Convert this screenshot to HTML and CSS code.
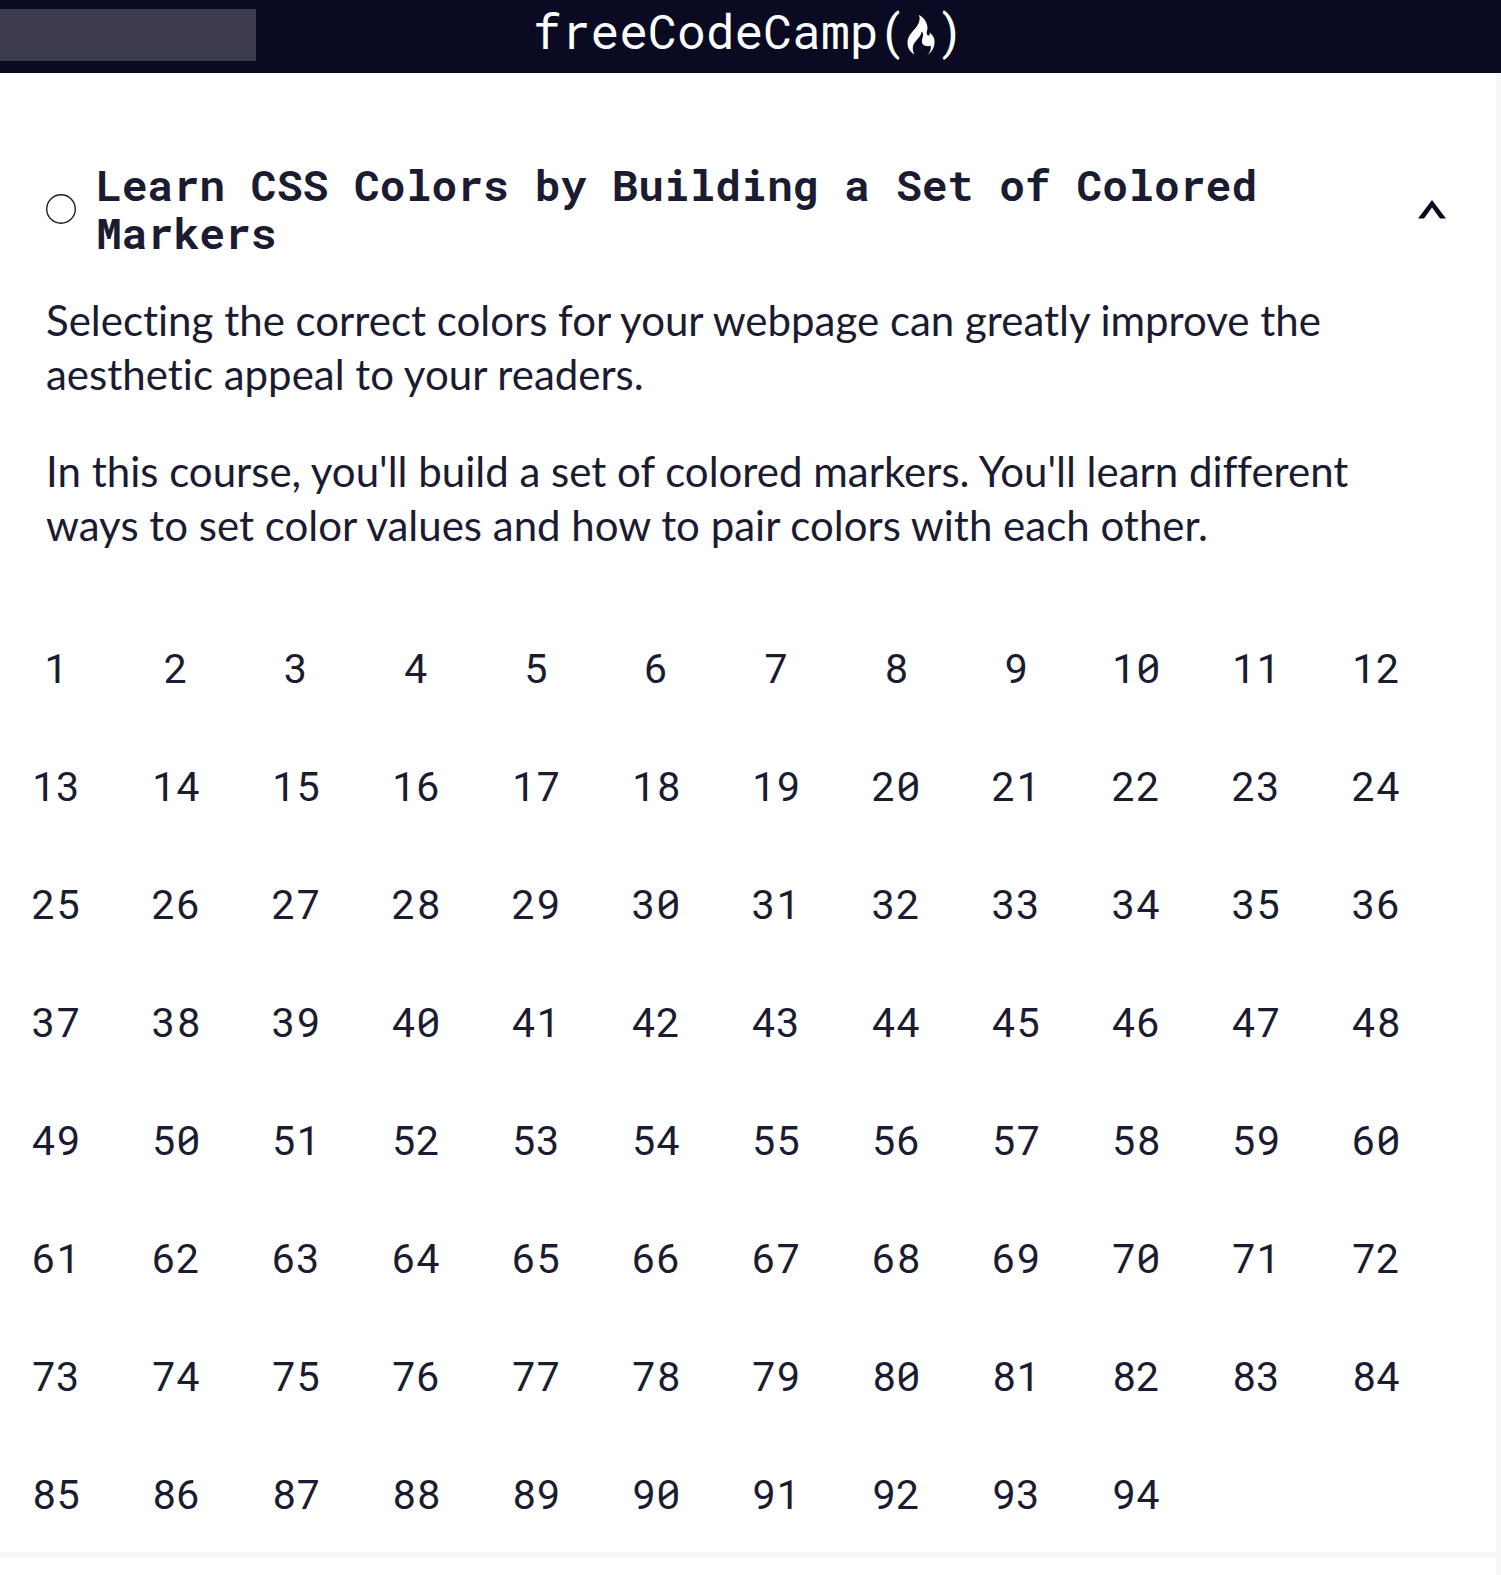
FILE: index.html
```html
<!DOCTYPE html>
<html lang="en">
<head>
  <meta charset="utf-8">
  <meta name="viewport" content="width=device-width, initial-scale=1">
  <title>Learn CSS Colors by Building a Set of Colored Markers | freeCodeCamp.org</title>
  <link rel="stylesheet" href="styles.css">
</head>
<body>
  <header class="site-header">
    <input class="search" type="search" aria-label="Search">
    <a class="logo" href="#" aria-label="freeCodeCamp">
      <span>freeCodeCamp(</span>
      <svg class="flame" viewBox="0 0 28 40" aria-hidden="true">
        <path d="M12 0C17 2 20.500 8 20.500 13C20.500 15.500 19 17.500 20 19.500C21.500 21.500 23.500 20.500 22.500 17.500C26 20 28 24 27.500 28C27 33.500 24.500 37 20.500 40C23.500 36.500 24.500 33 23.500 30.500C22 31.500 18 31.500 16 29.500C14 27 15.500 24 16 20.500C16.200 18 15.500 17 14.500 16.500C14.500 22 7 26 6 31C5.400 34.500 6 37 7.500 39.500C3 37 0.500 33 0.500 28C0.500 21 5 17.500 9 12.500C12 8.500 13.500 4.500 12 0Z"/>
      </svg>
      <span>)</span>
    </a>
  </header>

  <main class="map">
    <section class="block">
      <h3 class="block-heading">
        <button class="block-toggle" type="button" aria-expanded="true" aria-controls="block-body">
          <svg class="status" viewBox="0 0 30 30" aria-hidden="true"><circle cx="15" cy="15" r="14.300"/></svg>
          <span class="block-title">Learn CSS Colors by Building a Set of Colored Markers</span>
          <svg class="chevron" viewBox="0 0 28 19" aria-hidden="true"><path d="M0 18.500L14 0L28 18.500H22L14 7.500L6 18.500Z"/></svg>
        </button>
      </h3>
      <div id="block-body">
        <div class="intro">
          <p>Selecting the correct colors for your webpage can greatly improve the aesthetic appeal to your readers.</p>
          <p>In this course, you'll build a set of colored markers. You'll learn different ways to set color values and how to pair colors with each other.</p>
        </div>
        <nav class="steps" aria-label="Steps">
          <a href="#">1</a><a href="#">2</a><a href="#">3</a><a href="#">4</a><a href="#">5</a><a href="#">6</a><a href="#">7</a><a href="#">8</a><a href="#">9</a><a href="#">10</a><a href="#">11</a><a href="#">12</a>
          <a href="#">13</a><a href="#">14</a><a href="#">15</a><a href="#">16</a><a href="#">17</a><a href="#">18</a><a href="#">19</a><a href="#">20</a><a href="#">21</a><a href="#">22</a><a href="#">23</a><a href="#">24</a>
          <a href="#">25</a><a href="#">26</a><a href="#">27</a><a href="#">28</a><a href="#">29</a><a href="#">30</a><a href="#">31</a><a href="#">32</a><a href="#">33</a><a href="#">34</a><a href="#">35</a><a href="#">36</a>
          <a href="#">37</a><a href="#">38</a><a href="#">39</a><a href="#">40</a><a href="#">41</a><a href="#">42</a><a href="#">43</a><a href="#">44</a><a href="#">45</a><a href="#">46</a><a href="#">47</a><a href="#">48</a>
          <a href="#">49</a><a href="#">50</a><a href="#">51</a><a href="#">52</a><a href="#">53</a><a href="#">54</a><a href="#">55</a><a href="#">56</a><a href="#">57</a><a href="#">58</a><a href="#">59</a><a href="#">60</a>
          <a href="#">61</a><a href="#">62</a><a href="#">63</a><a href="#">64</a><a href="#">65</a><a href="#">66</a><a href="#">67</a><a href="#">68</a><a href="#">69</a><a href="#">70</a><a href="#">71</a><a href="#">72</a>
          <a href="#">73</a><a href="#">74</a><a href="#">75</a><a href="#">76</a><a href="#">77</a><a href="#">78</a><a href="#">79</a><a href="#">80</a><a href="#">81</a><a href="#">82</a><a href="#">83</a><a href="#">84</a>
          <a href="#">85</a><a href="#">86</a><a href="#">87</a><a href="#">88</a><a href="#">89</a><a href="#">90</a><a href="#">91</a><a href="#">92</a><a href="#">93</a><a href="#">94</a>
        </nav>
      </div>
    </section>
    <section class="block block-next"></section>
  </main>
</body>
</html>
```

FILE: styles.css
```css
* {
  box-sizing: border-box;
}

body {
  display: flex;
  flex-direction: column;
  min-height: 100vh;
  margin: 0;
  background: #f5f6f7;
  color: #1b1b32;
  font-family: Lato, sans-serif;
  font-size: 42px;
  font-variant-ligatures: none;
  line-height: 54px;
}

.site-header {
  display: grid;
  grid-template-columns: 1fr auto 1fr;
  align-items: center;
  height: 73px;
  padding: 0 4px 3px 0;
  background: #0a0a23;
}

.search {
  width: 256px;
  height: 52px;
  padding: 0 16px;
  border: 0;
  border-radius: 0;
  background: #3d3b4e;
  color: #fff;
  font: inherit;
  font-size: 24px;
}

.logo {
  display: flex;
  align-items: center;
  color: #fff;
  font-family: "Roboto Mono", "Liberation Mono", monospace;
  font-size: 48px;
  font-weight: 400;
  text-decoration: none;
}

.logo span {
  padding-bottom: 8px;
}

.flame {
  width: 28px;
  height: 40px;
  fill: #fff;
}

.map {
  display: flex;
  flex: 1;
  flex-direction: column;
  gap: 6px;
  padding-right: 5px;
}

.block {
  padding-top: 88px;
  background: #fff;
}

.block-next {
  flex: 1;
  padding: 0;
}

.block-heading {
  margin: 0;
  font-size: 43px;
}

.block-toggle {
  display: flex;
  align-items: center;
  gap: 20px;
  width: 100%;
  padding: 0 50px 0 46px;
  border: 0;
  background: none;
  color: inherit;
  font-family: "Roboto Mono", "Liberation Mono", monospace;
  font-size: 43px;
  font-weight: 700;
  line-height: 48px;
  text-align: left;
}

.status {
  flex: none;
  width: 30px;
  height: 30px;
  fill: none;
  stroke: #1b1b32;
  stroke-width: 1.4;
}

.block-title {
  flex: 1;
}

.chevron {
  flex: none;
  width: 28px;
  height: 19px;
  fill: #0a0a23;
}

.intro {
  padding: 36px 96px 0 46px;
}

.intro p {
  margin: 0 0 43px;
}

.steps {
  display: grid;
  grid-template-columns: repeat(12, 1fr);
  column-gap: 20px;
  padding: 13px 70px 0 6px;
  font-family: "Roboto Mono", Roboto, sans-serif;
  font-size: 41px;
}

.steps a {
  padding: 32px 0;
  color: inherit;
  text-align: center;
  text-decoration: none;
}
```
